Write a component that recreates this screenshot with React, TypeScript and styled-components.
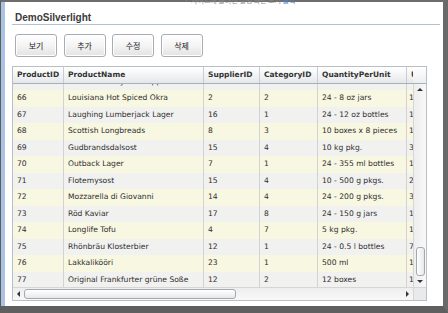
import React from 'react';
import styled, { createGlobalStyle } from 'styled-components';

const GlobalStyle = createGlobalStyle`
  html, body {
    margin: 0;
    padding: 0;
    background: #ffffff;
  }
  body {
    width: 448px;
    height: 313px;
    overflow: hidden;
    font-family: 'DejaVu Sans', Verdana, sans-serif;
  }
`;

interface Product {
  id: number;
  name: string;
  supplier: number;
  category: number;
  qty: string;
  price: string;
}

const products: Product[] = [
  { id: 65, name: 'Louisiana Fiery Hot Pepper Sauce', supplier: 2, category: 2, qty: '32 - 8 oz bottles', price: '21.05' },
  { id: 66, name: 'Louisiana Hot Spiced Okra', supplier: 2, category: 2, qty: '24 - 8 oz jars', price: '17' },
  { id: 67, name: 'Laughing Lumberjack Lager', supplier: 16, category: 1, qty: '24 - 12 oz bottles', price: '14' },
  { id: 68, name: 'Scottish Longbreads', supplier: 8, category: 3, qty: '10 boxes x 8 pieces', price: '12.5' },
  { id: 69, name: 'Gudbrandsdalsost', supplier: 15, category: 4, qty: '10 kg pkg.', price: '36' },
  { id: 70, name: 'Outback Lager', supplier: 7, category: 1, qty: '24 - 355 ml bottles', price: '15' },
  { id: 71, name: 'Flotemysost', supplier: 15, category: 4, qty: '10 - 500 g pkgs.', price: '21.5' },
  { id: 72, name: 'Mozzarella di Giovanni', supplier: 14, category: 4, qty: '24 - 200 g pkgs.', price: '34.8' },
  { id: 73, name: 'Röd Kaviar', supplier: 17, category: 8, qty: '24 - 150 g jars', price: '15' },
  { id: 74, name: 'Longlife Tofu', supplier: 4, category: 7, qty: '5 kg pkg.', price: '10' },
  { id: 75, name: 'Rhönbräu Klosterbier', supplier: 12, category: 1, qty: '24 - 0.5 l bottles', price: '7.75' },
  { id: 76, name: 'Lakkalikööri', supplier: 23, category: 1, qty: '500 ml', price: '18' },
  { id: 77, name: 'Original Frankfurter grüne Soße', supplier: 12, category: 2, qty: '12 boxes', price: '13' },
];

const headers = ['ProductID', 'ProductName', 'SupplierID', 'CategoryID', 'QuantityPerUnit', 'UnitPrice'];
const buttons = ['보기', '추가', '수정', '삭제'];

const COLS = '51px 140px 56px 58px 89px 1fr';

const Arrow = ({ dir }: { dir: 'up' | 'down' | 'left' | 'right' }) => {
  const pts = {
    up: '0,3 3,0 6,3',
    down: '0,0 6,0 3,3',
    left: '3,0 3,6 0,3',
    right: '0,0 0,6 3,3',
  }[dir];
  const w = dir === 'up' || dir === 'down' ? 6 : 3;
  const h = dir === 'up' || dir === 'down' ? 3 : 6;
  return (
    <svg width={w} height={h} viewBox={`0 0 ${w} ${h}`}>
      <polygon points={pts} fill="#333" />
    </svg>
  );
};

export default function App() {
  return (
    <>
      <GlobalStyle />
      <Frame>
        <TopNote>
          ㆍ 사이트에 올려진 실행 화면 보기 <NoteLink>클릭</NoteLink>
        </TopNote>
        <Panel>
          <TitleBar>DemoSilverlight</TitleBar>
          <Toolbar>
            {buttons.map((b) => (
              <ActionButton key={b}>{b}</ActionButton>
            ))}
          </Toolbar>
          <DataGrid>
            <HeaderRow>
              {headers.map((h) => (
                <HeaderCell key={h}>{h}</HeaderCell>
              ))}
            </HeaderRow>
            <HeaderFiller />
            <Body>
              <RowList>
                {products.map((p, i) => (
                  <Row key={p.id} $alt={i % 2 === 1}>
                    <Cell>{p.id}</Cell>
                    <Cell>{p.name}</Cell>
                    <Cell>{p.supplier}</Cell>
                    <Cell>{p.category}</Cell>
                    <Cell>{p.qty}</Cell>
                    <Cell $clip>{p.price}</Cell>
                  </Row>
                ))}
              </RowList>
            </Body>
            <VScroll>
              <ScrollButton>
                <Arrow dir="up" />
              </ScrollButton>
              <VTrack>
                <VThumb />
              </VTrack>
              <ScrollButton>
                <Arrow dir="down" />
              </ScrollButton>
            </VScroll>
            <HScroll>
              <HButton>
                <Arrow dir="left" />
              </HButton>
              <HTrack>
                <HThumb />
              </HTrack>
              <HButton>
                <Arrow dir="right" />
              </HButton>
            </HScroll>
            <Corner />
          </DataGrid>
        </Panel>
      </Frame>
    </>
  );
}

const Frame = styled.div`
  position: relative;
  width: 448px;
  height: 313px;
  box-sizing: border-box;
  display: flex;
  background: #ffffff;
  border-top: 2px solid #6d6d6d;
  border-right: 5px solid #6a6a6a;
  border-bottom: 7px solid #5f5f5f;
  border-left: 1px solid #5c5c5c;
`;

const TopNote = styled.div`
  position: absolute;
  top: -6px;
  left: 182px;
  font-family: 'Noto Sans CJK KR', sans-serif;
  font-size: 7px;
  line-height: 9px;
  color: #8a8a8a;
  white-space: nowrap;
`;

const NoteLink = styled.span`
  color: #5b7fc0;
`;

const Panel = styled.div`
  flex: 1;
  display: flex;
  flex-direction: column;
  border-left: 4px solid #aac3e4;
  padding: 0 3px 0 7px;
`;

const TitleBar = styled.div`
  padding: 10px 0 0 3px;
  height: 12px;
  line-height: 12px;
  font-family: 'Liberation Sans', Arial, sans-serif;
  font-size: 10px;
  font-weight: bold;
  color: #3a3a3a;
  border-bottom: 1px solid #b3c1cf;
`;

const Toolbar = styled.div`
  display: flex;
  gap: 6.5px;
  padding-left: 3px;
  margin-top: 9px;
`;

const ActionButton = styled.button`
  width: 42px;
  height: 23px;
  padding: 0;
  border: 1px solid #a9adb2;
  border-radius: 3px;
  background: linear-gradient(#ffffff, #f4f4f4 50%, #e3e3e3);
  box-shadow: inset 0 0 0 1px #ffffff;
  font-family: 'Noto Sans CJK KR', sans-serif;
  font-size: 8px;
  color: #222;
`;

const DataGrid = styled.div`
  margin-top: 9px;
  width: 415px;
  height: 235px;
  box-sizing: border-box;
  border: 1px solid #b9bfc5;
  display: grid;
  grid-template-columns: 400px 13px;
  grid-template-rows: 17px 203px 13px;
  background: #ffffff;
`;

const HeaderRow = styled.div`
  display: grid;
  grid-template-columns: ${COLS};
  background: linear-gradient(#ffffff, #f3f4f5 50%, #e4e7ea);
  border-bottom: 1px solid #a9b1b8;
  box-sizing: border-box;
`;

const HeaderCell = styled.div`
  padding: 0 4px;
  line-height: 16px;
  font-size: 7.5px;
  font-weight: bold;
  color: #333;
  white-space: nowrap;
  overflow: hidden;
  border-right: 1px solid #c9cdd2;
`;

const HeaderFiller = styled.div`
  background: linear-gradient(#ffffff, #eceef0);
  border-bottom: 1px solid #a9b1b8;
  box-sizing: border-box;
`;

const Body = styled.div`
  overflow: hidden;
`;

const RowList = styled.div`
  margin-top: -10.5px;
`;

const Row = styled.div<{ $alt: boolean }>`
  display: grid;
  grid-template-columns: ${COLS};
  height: 16.5px;
  background: ${({ $alt }) => ($alt ? '#f8f7e1' : '#f1f1f0')};
`;

const Cell = styled.div<{ $clip?: boolean }>`
  padding: 0 ${({ $clip }) => ($clip ? '2px' : '4px')};
  line-height: 16.5px;
  font-size: 7.6px;
  color: #2e2e2e;
  white-space: nowrap;
  overflow: hidden;
  border-right: ${({ $clip }) => ($clip ? 'none' : '1px solid #d2d2d2')};
`;

const VScroll = styled.div`
  display: flex;
  flex-direction: column;
  background: linear-gradient(90deg, #eeeeee, #f8f8f8);
  border-left: 1px solid #d6d6d6;
`;

const ScrollButton = styled.div`
  height: 11px;
  display: flex;
  align-items: center;
  justify-content: center;
`;

const VTrack = styled.div`
  flex: 1;
  display: flex;
  flex-direction: column;
  justify-content: flex-end;
  align-items: center;
`;

const VThumb = styled.div`
  width: 9px;
  height: 29px;
  box-sizing: border-box;
  border: 1px solid #a4a9ae;
  border-radius: 3px;
  background: linear-gradient(90deg, #ffffff, #e6e8ea);
`;

const HScroll = styled.div`
  display: flex;
  background: linear-gradient(#eeeeee, #f8f8f8);
  border-top: 1px solid #d6d6d6;
`;

const HButton = styled.div`
  width: 11px;
  display: flex;
  align-items: center;
  justify-content: center;
`;

const HTrack = styled.div`
  flex: 1;
  display: flex;
  align-items: center;
`;

const HThumb = styled.div`
  width: 212px;
  height: 10px;
  box-sizing: border-box;
  border: 1px solid #a4a9ae;
  border-radius: 3px;
  background: linear-gradient(#ffffff, #e6e8ea);
`;

const Corner = styled.div`
  background: #e9eaeb;
  border-top: 1px solid #d6d6d6;
  border-left: 1px solid #d6d6d6;
`;
